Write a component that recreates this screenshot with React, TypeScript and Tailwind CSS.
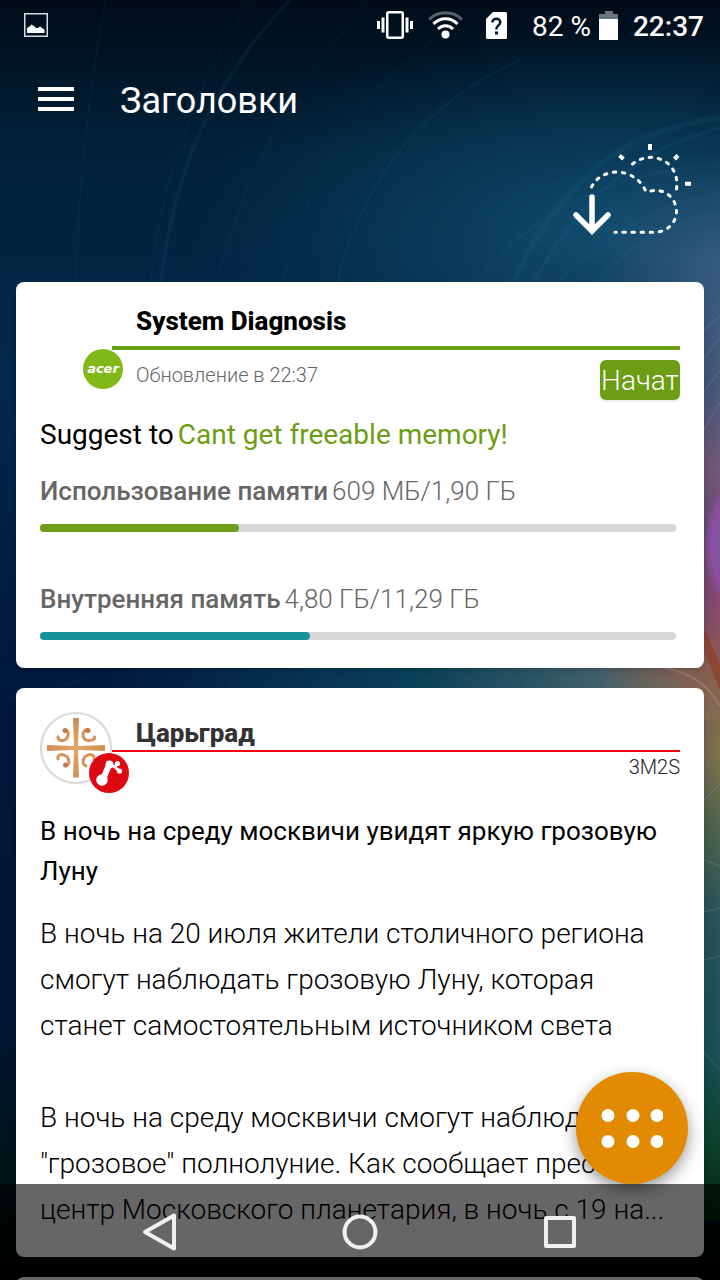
const meters = [
  {
    label: "Использование памяти",
    value: "609 МБ/1,90 ГБ",
    percent: 31.3,
    color: "bg-[#6c9d14]",
  },
  {
    label: "Внутренняя память",
    value: "4,80 ГБ/11,29 ГБ",
    percent: 42.5,
    color: "bg-[#16929d]",
  },
];

const Wallpaper = () => (
  <svg
    className="absolute inset-0 w-full h-full"
    viewBox="0 0 720 1280"
    preserveAspectRatio="none"
    aria-hidden="true"
  >
    <defs>
      <linearGradient id="base" x1="0" y1="0" x2="0" y2="1">
        <stop offset="0" stopColor="#000c18" />
        <stop offset="0.12" stopColor="#02223c" />
        <stop offset="0.3" stopColor="#02284c" />
        <stop offset="0.55" stopColor="#02173c" />
        <stop offset="0.8" stopColor="#011634" />
        <stop offset="0.92" stopColor="#001416" />
        <stop offset="1" stopColor="#000404" />
      </linearGradient>
      <radialGradient id="glow">
        <stop offset="0" stopColor="#145478" stopOpacity="0.8" />
        <stop offset="0.5" stopColor="#0c4a6a" stopOpacity="0.5" />
        <stop offset="1" stopColor="#0a3c5c" stopOpacity="0" />
      </radialGradient>
      <radialGradient id="iris">
        <stop offset="0" stopColor="#7a5a9c" />
        <stop offset="0.7" stopColor="#8c50a4" stopOpacity="0.9" />
        <stop offset="1" stopColor="#8c50a4" stopOpacity="0" />
      </radialGradient>
      <linearGradient id="spectrum" x1="0" y1="0" x2="0" y2="1">
        <stop offset="0" stopColor="#2c5a78" stopOpacity="0" />
        <stop offset="0.1" stopColor="#365c80" />
        <stop offset="0.22" stopColor="#47587a" />
        <stop offset="0.3" stopColor="#755a78" />
        <stop offset="0.36" stopColor="#6c4a76" />
        <stop offset="0.42" stopColor="#8a4a70" />
        <stop offset="0.48" stopColor="#8c5a52" />
        <stop offset="0.56" stopColor="#807450" />
        <stop offset="0.64" stopColor="#4c644c" />
        <stop offset="0.72" stopColor="#28555a" />
        <stop offset="0.84" stopColor="#1a5258" />
        <stop offset="0.92" stopColor="#0c4630" />
        <stop offset="1" stopColor="#03260f" />
      </linearGradient>
      <linearGradient id="fade">
        <stop offset="0" stopColor="#000" />
        <stop offset="0.6" stopColor="#222" />
        <stop offset="0.85" stopColor="#aaa" />
        <stop offset="1" stopColor="#fff" />
      </linearGradient>
      <mask id="side">
        <rect x="420" y="150" width="300" height="1130" fill="url(#fade)" />
      </mask>
      <linearGradient id="teal">
        <stop offset="0" stopColor="#0b4a60" stopOpacity="0" />
        <stop offset="0.5" stopColor="#0b4a60" stopOpacity="0.8" />
        <stop offset="0.8" stopColor="#34606e" />
        <stop offset="1" stopColor="#6a6a54" />
      </linearGradient>
    </defs>
    <rect width="720" height="1280" fill="url(#base)" />
    <ellipse cx="610" cy="230" rx="420" ry="200" fill="url(#glow)" />
    <rect x="100" y="640" width="620" height="80" fill="url(#teal)" />
    <rect
      x="420"
      y="150"
      width="300"
      height="1070"
      fill="url(#spectrum)"
      mask="url(#side)"
    />
    <g fill="none" stroke="#2b7d99" strokeOpacity="0.1">
      <path d="M75 290C78 200 85 120 105 0" />
      <path d="M150 290C160 180 190 100 250 0" />
      <path d="M160 290C172 180 205 90 290 0" strokeWidth="4" />
      <path d="M215 290C240 180 290 90 370 0" />
      <path d="M280 290C310 170 360 90 460 20" />
      <path d="M335 290C360 190 410 110 520 60" strokeWidth="2" />
      <path d="M470 290C520 220 610 170 720 165" strokeWidth="2" />
      <path d="M510 290C560 180 620 130 720 118" strokeWidth="6" />
      <path d="M530 290C580 190 650 145 720 128" strokeWidth="4" />
      <path d="M550 290C600 240 650 205 720 195" strokeWidth="2" />
      <path d="M590 290C630 240 680 220 720 212" strokeWidth="3" />
      <path d="M0 700C60 690 120 670 160 640" />
      <path d="M220 668L235 690M330 668L350 690M450 668L490 690" />
    </g>
    <ellipse cx="728" cy="545" rx="24" ry="60" fill="url(#iris)" />
    <path
      d="M704 652L720 690V664L704 628Z"
      fill="#8a3a20"
      fillOpacity="0.6"
    />
    <g fill="none" stroke="#d8b9d0" strokeOpacity="0.2">
      <path d="M704 330L720 316M704 358L720 338M704 392L720 370M704 430L720 402" />
      <path d="M709 570C705 545 708 520 720 500" stroke="#c060e0" />
      <path d="M664 668C690 672 708 684 720 706" stroke="#e8d8b0" strokeWidth="2" />
      <path d="M704 800L720 784M704 860L720 866M704 912L720 908M704 960L720 956M704 1052L720 1070" />
    </g>
  </svg>
);

const StatusBar = () => (
  <div className="flex items-center justify-between h-[50px] pl-6 pr-4 text-[28px] leading-8">
    <svg width="24" height="24" viewBox="0 0 24 24" aria-hidden="true">
      <rect
        x="0.75"
        y="0.75"
        width="22.5"
        height="22.5"
        fill="none"
        stroke="#d5dade"
        strokeWidth="1.5"
      />
      <path
        d="M3 20V15L5 14L7.500 11.500L10 13L12 15L14 15L16 13.500L18 15L20.500 16.500V20Z"
        fill="#fff"
      />
    </svg>
    <div className="flex items-center">
      <svg
        className="mr-[15px]"
        width="36"
        height="28"
        viewBox="0 0 36 28"
        fill="#fff"
        aria-hidden="true"
      >
        <rect
          x="10.250"
          y="1.250"
          width="15.500"
          height="25.500"
          rx="1.500"
          fill="none"
          stroke="#fff"
          strokeWidth="2.500"
        />
        <path d="M0 10h3v8H0zM4.500 6.500h3v15h-3zM28.500 6.500h3v15h-3zM33 10h3v8h-3z" />
      </svg>
      <svg
        className="mr-[23px]"
        width="35"
        height="28"
        viewBox="0 0 35 28"
        fill="none"
        stroke="#fff"
        strokeWidth="3"
        aria-hidden="true"
      >
        <path d="M1 8.500C10 -.5 25 -.5 34 8.500" strokeOpacity="0.35" />
        <path d="M5.500 13C12 6 23 6 29.500 13" />
        <path d="M10 18C14 13.500 21 13.500 25 18" />
        <circle cx="17.500" cy="23.500" r="4" fill="#fff" stroke="none" />
      </svg>
      <svg
        className="mr-[25px]"
        width="21"
        height="27"
        viewBox="0 0 21 27"
        aria-hidden="true"
      >
        <path
          d="M7 0H19.500Q21 0 21 1.500V25.500Q21 27 19.500 27H1.500Q0 27 0 25.500V7Z"
          fill="#fff"
        />
        <path
          d="M6.300 10.500C6.300 5.500 14.300 5.500 14.300 10.300C14.300 13.500 10.300 13.300 10.300 17.500"
          fill="none"
          stroke="#021a2a"
          strokeWidth="2.500"
        />
        <rect x="9" y="19.500" width="3" height="3" fill="#021a2a" />
      </svg>
      <span className="pt-1">82 %</span>
      <svg
        className="ml-2 mr-[14px]"
        width="20"
        height="29"
        viewBox="0 0 20 29"
        aria-hidden="true"
      >
        <path d="M6 0H14V3H19V8H0V3H6Z" fill="#68767f" />
        <path d="M0 8H19V29H0Z" fill="#fff" />
      </svg>
      <span className="pt-1 font-medium">22:37</span>
    </div>
  </div>
);

const WeatherIcon = () => (
  <svg
    width="120"
    height="92"
    viewBox="0 0 120 92"
    fill="none"
    stroke="#fff"
    strokeWidth="3"
    aria-hidden="true"
  >
    <g strokeDasharray="2.500 6.600" strokeLinecap="round">
      <path d="M19.500 43C25 32 36 28 46 28C58 29 68 35 73.500 46.500" />
      <path d="M79 47C94 44 104 55 104.500 67C104.500 79 95 88 83 88.300H43" />
      <path d="M60.500 20C68 14 79 11 89 15.500C101 20 108 34 103.500 49" />
    </g>
    <g strokeWidth="4">
      <path d="M78 0V6M47.500 11.500L51.500 15M106 11.500L102.500 15M113 39.700H119" />
    </g>
    <path
      d="M20 53V87M4 71L20 87L36 71"
      strokeWidth="5.500"
      strokeLinecap="round"
    />
  </svg>
);

const DiagnosisCard = () => (
  <section className="bg-white rounded-lg px-6 pb-7 shadow-md text-[26px]">
    <div className="flex">
      <div className="relative w-[72px] shrink-0">
        <div className="absolute left-[43px] top-[67px] flex items-center justify-center size-10 rounded-full bg-[#83b81a] text-white font-['DejaVu_Sans'] text-[13px] leading-4 font-bold italic">
          acer
        </div>
      </div>
      <div className="flex-1">
        <h2 className="h-16 pt-[14px] pl-6 flex items-center font-extrabold text-black">
          System Diagnosis
        </h2>
        <div className="h-1 bg-[#6c9d14]" />
        <div className="flex items-start justify-between mt-[10px] pl-6">
          <p className="text-[20px] leading-[30px] font-light text-[#666]">
            Обновление в 22:37
          </p>
          <button className="w-20 h-10 overflow-hidden rounded-md bg-[#6c9d14] text-white text-[28px] leading-[42px] font-light shadow">
            Начат
          </button>
        </div>
      </div>
    </div>
    <p className="mt-[15px] text-[28px] leading-10 text-black">
      Suggest to
      <span className="ml-1 text-[#6c9d14]">Cant get freeable memory!</span>
    </p>
    <div className="flex flex-col gap-[47px] mt-4 mr-1 text-[#666]">
      {meters.map((meter) => (
        <div key={meter.label}>
          <p className="leading-10">
            <span className="font-medium">{meter.label}</span>
            <span className="ml-1 font-light">{meter.value}</span>
          </p>
          <div
            role="progressbar"
            aria-label={meter.label}
            aria-valuenow={meter.percent}
            className="h-2 mt-[13px] rounded-full bg-[#d8d8d8]"
          >
            <div
              className={`h-full rounded-full ${meter.color}`}
              style={{ width: `${meter.percent}%` }}
            />
          </div>
        </div>
      ))}
    </div>
  </section>
);

const CrossLogo = () => (
  <svg
    width="72"
    height="72"
    viewBox="0 0 72 72"
    fill="none"
    aria-hidden="true"
  >
    <defs>
      <linearGradient id="gold" x1="0" y1="0" x2="1" y2="1">
        <stop offset="0" stopColor="#b5744a" />
        <stop offset="0.5" stopColor="#e6a665" />
        <stop offset="1" stopColor="#bd7a45" />
      </linearGradient>
    </defs>
    <circle cx="36" cy="36" r="35" fill="#fff" stroke="#d8d8d8" strokeWidth="2" />
    <path
      d="M33 6H39L38 34L65 33V39L38 38L39 65.500H33L34 38L7 39V33L34 34Z"
      fill="url(#gold)"
    />
    <g stroke="#d4935a" strokeWidth="3" strokeLinecap="round">
      <path d="M25 18C30 19 29 27 23 28.500C20 29 17.500 27 18 25" />
      <path d="M47 17.500C41 20 42 28 48.500 28.500C52 29 55 27 54.500 25" />
      <path d="M18 47C17 43 21 41.500 25 43.500C30 46 30 52 26 54" />
      <path d="M54 47C55 43 51 41.500 47 43.500C42 46 42 52 46 54" />
    </g>
    <g fill="#c07a48">
      <circle cx="25" cy="18.500" r="2.500" />
      <circle cx="48" cy="18.500" r="2.500" />
      <circle cx="25.500" cy="53" r="2.500" />
    </g>
  </svg>
);

const NewsCard = () => (
  <article className="bg-white rounded-lg px-6 pb-6 shadow-md text-black">
    <div className="flex">
      <div className="relative w-[72px] pt-6 shrink-0">
        <CrossLogo />
        <svg
          className="absolute left-[49px] top-[65px]"
          width="40"
          height="40"
          viewBox="0 0 40 40"
          aria-hidden="true"
        >
          <circle cx="20" cy="20" r="20" fill="#dd0812" />
          <g fill="#fff" stroke="#fff" strokeLinecap="round">
            <circle cx="13" cy="27" r="5.800" stroke="none" />
            <circle cx="20.500" cy="11.500" r="3.900" stroke="none" />
            <circle cx="28.500" cy="10.500" r="2.600" stroke="none" />
            <circle cx="30.500" cy="18" r="2.600" stroke="none" />
            <path d="M14.500 25L20 12" strokeWidth="6" />
            <path
              d="M21 11.500L26 14L30 18M26 14L28.500 10.500"
              strokeWidth="3"
              fill="none"
            />
          </g>
        </svg>
      </div>
      <div className="flex-1 h-[94px]">
        <h2 className="h-[62px] pt-7 pl-6 flex items-center text-[26px] font-extrabold text-[#333]">
          Царьград
        </h2>
        <div className="h-0.5 bg-[#f5000f]" />
        <p className="text-right text-[20px] leading-[30px] font-light text-[#222]">
          3M2S
        </p>
      </div>
    </div>
    <h3 className="mt-[27px] text-[26px] leading-10 font-[450]">
      В ночь на среду москвичи увидят яркую грозовую Луну
    </h3>
    <div className="flex flex-col gap-[46px] mt-5 text-[28px] leading-[46px] font-light">
      <p>
        В ночь на 20 июля жители столичного региона смогут наблюдать грозовую
        Луну, которая
        <br />
        станет самостоятельным источником света
      </p>
      <p className="-mr-3">
        В ночь на среду москвичи смогут наблюдать
        <br />
        "грозовое" полнолуние. Как сообщает пресс-
        <br />
        центр Московского планетария, в ночь с 19 на...
      </p>
    </div>
  </article>
);

const NavBar = () => (
  <nav className="fixed inset-x-0 bottom-0 flex items-center justify-center gap-[140px] h-24 bg-black/60">
    <button aria-label="Назад" className="w-15">
      <svg
        className="mx-auto"
        width="40"
        height="40"
        viewBox="0 0 40 40"
        fill="none"
        stroke="#f0f0f0"
        strokeWidth="4"
        strokeLinejoin="round"
      >
        <path d="M5 20L34 3.500V36.500Z" />
      </svg>
    </button>
    <button aria-label="Домой" className="w-15">
      <svg
        className="mx-auto"
        width="40"
        height="40"
        viewBox="0 0 40 40"
        fill="none"
        stroke="#f0f0f0"
        strokeWidth="4"
      >
        <circle cx="20" cy="20" r="15.500" />
      </svg>
    </button>
    <button aria-label="Обзор" className="w-15">
      <svg
        className="mx-auto"
        width="40"
        height="40"
        viewBox="0 0 40 40"
        fill="none"
        stroke="#f0f0f0"
        strokeWidth="4"
        strokeLinejoin="round"
      >
        <path d="M6 6H34V34H6Z" />
      </svg>
    </button>
  </nav>
);

const App = () => {
  return (
    <div className="relative h-screen overflow-hidden bg-[#021a36] font-[Roboto,sans-serif] text-white">
      <Wallpaper />
      <div className="relative">
        <StatusBar />
        <header className="flex items-center h-[94px] pt-2 pl-[38px] gap-[46px]">
          <button aria-label="Меню" className="h-7">
            <svg width="36" height="28" viewBox="0 0 36 28" fill="#fff">
              <path d="M0 0h36v4H0zM0 10h36v4H0zM0 20h36v4H0z" />
            </svg>
          </button>
          <h1 className="text-[36px] leading-10">Заголовки</h1>
        </header>
        <div className="flex justify-end pr-7 mb-[46px]">
          <WeatherIcon />
        </div>
        <main className="flex flex-col gap-5 px-4">
          <DiagnosisCard />
          <NewsCard />
          <section className="h-24 bg-white rounded-lg" />
        </main>
      </div>
      <button
        aria-label="Ещё"
        className="fixed right-8 bottom-24 flex items-center justify-center size-28 rounded-full bg-[#e28b02] shadow-[0_6px_16px_rgba(0,0,0,0.4)]"
      >
        <svg width="62" height="40" viewBox="0 0 62 40" fill="#fff">
          <circle cx="7" cy="7.500" r="6.500" />
          <circle cx="32" cy="7.500" r="6.500" />
          <circle cx="56" cy="7.500" r="6.500" />
          <circle cx="7" cy="33.500" r="6.500" />
          <circle cx="32" cy="33.500" r="6.500" />
          <circle cx="56" cy="33.500" r="6.500" />
        </svg>
      </button>
      <NavBar />
    </div>
  );
};

export default App;
